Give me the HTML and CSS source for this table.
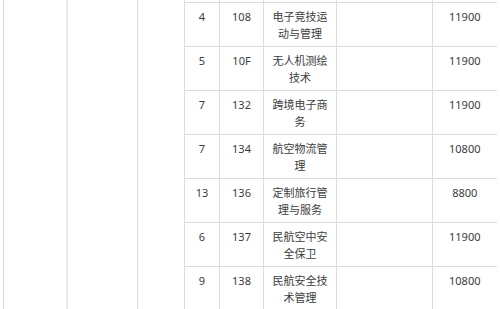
FILE: index.html
```html
<!DOCTYPE html>
<html lang="zh-CN">
<head>
<meta charset="utf-8">
<title>专业学费表</title>
<link rel="stylesheet" href="styles.css">
</head>
<body>
<div class="page">
<table class="fees">
  <colgroup>
    <col class="c1"><col class="c2"><col class="c3"><col class="c4"><col class="c5"><col class="c6"><col class="c7"><col class="c8">
  </colgroup>
  <tbody>
    <tr class="tail">
      <td class="merged m1" rowspan="8"></td>
      <td class="merged m2" rowspan="8"></td>
      <td class="merged m3" rowspan="8"></td>
      <td></td><td></td><td></td><td></td><td class="last"></td>
    </tr>
    <tr class="row"><td>4</td><td>108</td><td class="name">电子竞技运动与管理</td><td></td><td class="last">11900</td></tr>
    <tr class="row"><td>5</td><td>10F</td><td class="name">无人机测绘技术</td><td></td><td class="last">11900</td></tr>
    <tr class="row"><td>7</td><td>132</td><td class="name">跨境电子商务</td><td></td><td class="last">11900</td></tr>
    <tr class="row"><td>7</td><td>134</td><td class="name">航空物流管理</td><td></td><td class="last">10800</td></tr>
    <tr class="row"><td>13</td><td>136</td><td class="name">定制旅行管理与服务</td><td></td><td class="last">8800</td></tr>
    <tr class="row"><td>6</td><td>137</td><td class="name">民航空中安全保卫</td><td></td><td class="last">11900</td></tr>
    <tr class="row"><td>9</td><td>138</td><td class="name">民航安全技术管理</td><td></td><td class="last">10800</td></tr>
  </tbody>
</table>
</div>
</body>
</html>
```
FILE: styles.css
```css
html, body {
  margin: 0;
  padding: 0;
  background: #ffffff;
  overflow: hidden;
}

.page {
  width: 500px;
  height: 309px;
  overflow: hidden;
  padding-left: 3px;
  box-sizing: border-box;
}

.fees {
  border-collapse: collapse;
  table-layout: fixed;
  width: 493px;
  font-family: "Noto Sans", "Noto Sans CJK SC", sans-serif;
  font-size: 11px;
  line-height: 17px;
  color: #3c3c3c;
}

.c1 { width: 63px; }
.c2 { width: 71px; }
.c3 { width: 47px; }
.c4 { width: 35px; }
.c5 { width: 44px; }
.c6 { width: 73px; }
.c7 { width: 96px; }
.c8 { width: 64px; }

.fees td {
  border: 1px solid #dcdcdc;
  padding: 5px 5px 4px;
  text-align: center;
  vertical-align: top;
}

.fees td.last {
  border-right: none;
}

.tail td {
  border-top: none;
  height: 2px;
  padding: 0;
  font-size: 0;
  line-height: 0;
}

.fees td.merged {
  border-top: none;
  border-bottom: none;
}

.fees td.m1 {
  border-left: 1px solid #d4d4d4;
  border-right: 2px solid #e8e8e8;
}

.row td {
  height: 34px;
}
```
